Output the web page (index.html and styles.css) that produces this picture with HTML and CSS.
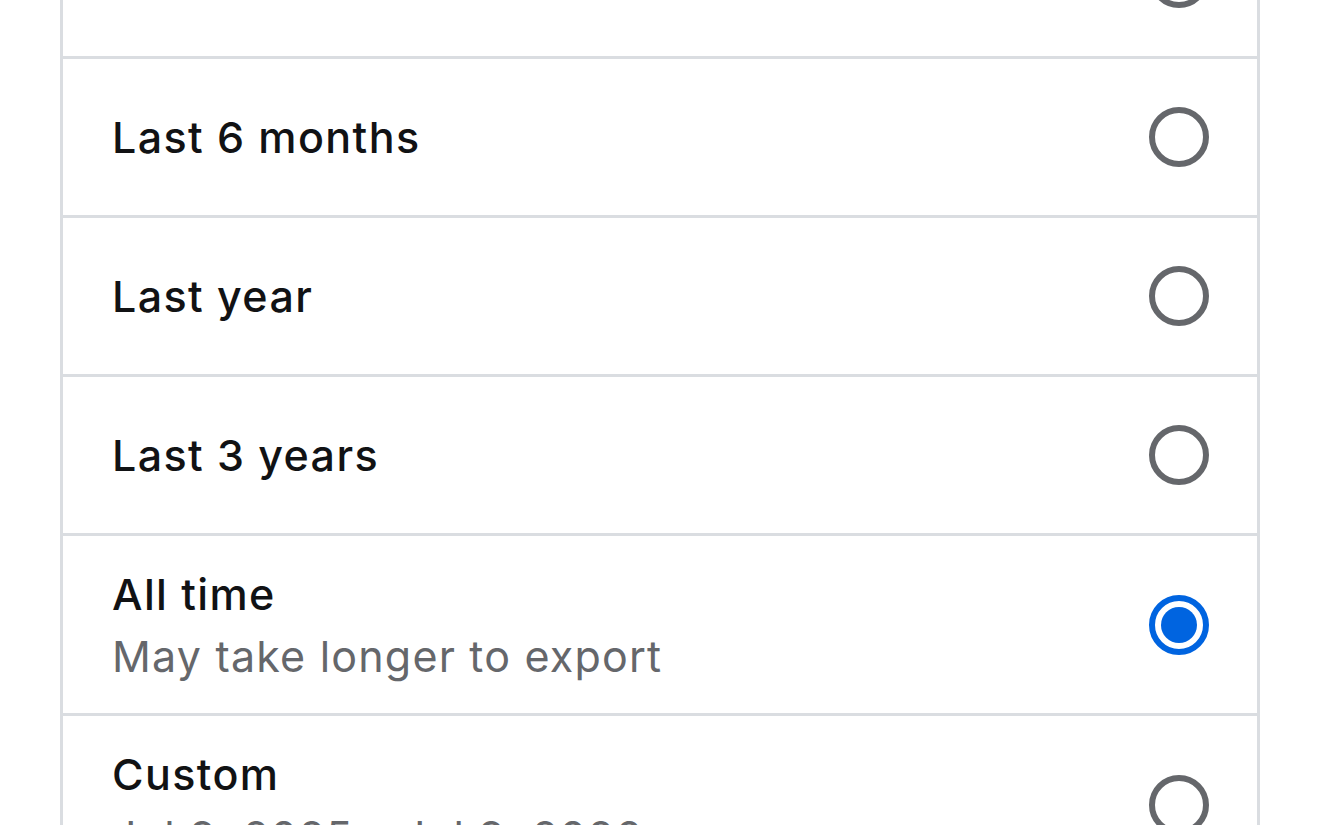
FILE: index.html
```html
<!DOCTYPE html>
<html lang="en">
<head>
  <meta charset="UTF-8">
  <title>Date range</title>
  <link rel="stylesheet" href="styles.css">
</head>
<body>

  <div class="range-list">
    <label class="range-row">
      <div class="range-text">
        <span class="range-title">Last 3 months</span>
      </div>
      <span class="radio"></span>
    </label>

    <label class="range-row">
      <div class="range-text">
        <span class="range-title">Last 6 months</span>
      </div>
      <span class="radio"></span>
    </label>

    <label class="range-row">
      <div class="range-text">
        <span class="range-title">Last year</span>
      </div>
      <span class="radio"></span>
    </label>

    <label class="range-row">
      <div class="range-text">
        <span class="range-title">Last 3 years</span>
      </div>
      <span class="radio"></span>
    </label>

    <label class="range-row tall">
      <div class="range-text">
        <span class="range-title">All time</span>
        <span class="range-sub">May take longer to export</span>
      </div>
      <span class="radio checked"></span>
    </label>

    <label class="range-row tall">
      <div class="range-text">
        <span class="range-title">Custom</span>
        <span class="range-sub">Jul 9, 2025 - Jul 9, 2026</span>
      </div>
      <span class="radio"></span>
    </label>
  </div>

</body>
</html>
```

FILE: styles.css
```css
body {
  margin: 0;
  background: #fff;
  font-family: Inter, 'Noto Sans', sans-serif;
  color: #1c1e21;
  overflow: hidden;
  height: 825px;
}
.range-list {
  width: 1200px;
  margin: -100px 0 0 60px;
  box-sizing: border-box;
  border-left: 3px solid #dadde1;
  border-right: 3px solid #dadde1;
}
.range-row {
  display: flex;
  align-items: center;
  justify-content: space-between;
  height: 156px;
  padding: 0 48px 0 49px;
  border-bottom: 3px solid #dadde1;
}
.range-row.tall {
  height: 177px;
}
.range-text {
  display: flex;
  flex-direction: column;
}
.range-title {
  font-size: 43px;
  font-weight: 500;
  line-height: 62px;
  letter-spacing: 1.4px;
  color: #111214;
}
.range-sub {
  font-size: 43px;
  font-weight: 400;
  line-height: 62px;
  letter-spacing: 1.2px;
  color: #65676b;
}
.radio {
  width: 60px;
  height: 60px;
  box-sizing: border-box;
  border: 6px solid #65676b;
  border-radius: 50%;
  display: flex;
  align-items: center;
  justify-content: center;
}
.radio.checked {
  border-color: #0064e0;
}
.radio.checked::after {
  content: "";
  width: 36px;
  height: 36px;
  border-radius: 50%;
  background: #0064e0;
}
```
